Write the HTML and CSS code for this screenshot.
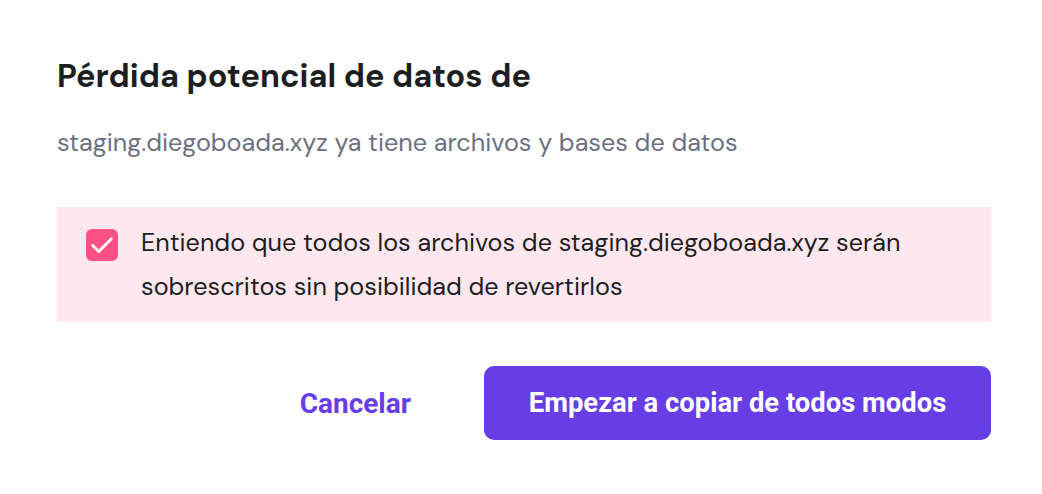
FILE: index.html
```html
<!DOCTYPE html>
<html lang="es">
<head>
    <meta charset="UTF-8">
    <meta name="viewport" content="width=device-width, initial-scale=1.0">
    <title>Pérdida potencial de datos</title>
    <link rel="stylesheet" href="styles.css">
</head>
<body>
    <div class="modal">
        <h2 class="modal-title">Pérdida potencial de datos de</h2>
        <p class="modal-text">staging.diegoboada.xyz ya tiene archivos y bases de datos</p>

        <label class="confirm-box">
            <span class="checkbox">
                <svg width="26" height="26" viewBox="0 0 24 24">
                    <path d="M3.5 12.5 L9 18 L20.5 6.5" fill="none" stroke="#fff" stroke-width="2.6" stroke-linecap="round" stroke-linejoin="round"/>
                </svg>
            </span>
            <span class="confirm-text">Entiendo que todos los archivos de staging.diegoboada.xyz serán sobrescritos sin posibilidad de revertirlos</span>
        </label>

        <div class="actions">
            <button class="btn-link">Cancelar</button>
            <button class="btn-primary">Empezar a copiar de todos modos</button>
        </div>
    </div>
</body>
</html>
```

FILE: styles.css
```css
body {
    margin: 0;
    background: #fff;
    font-family: 'DM Sans', Inter, 'Noto Sans', sans-serif;
    color: #2f1c6a;
}

.modal {
    width: 934px;
    padding: 56px 51px 54px 57px;
}

.modal-title {
    margin: 0;
    font-size: 32.4px;
    line-height: 40px;
    font-weight: 700;
    color: #1d1e20;
}

.modal-text {
    margin: 32px 0 0;
    font-size: 25.2px;
    line-height: 30px;
    color: #6d7081;
}

.confirm-box {
    display: flex;
    align-items: flex-start;
    gap: 23px;
    margin-top: 49px;
    padding: 22px 29px 13px;
    background: #fee7ef;
    cursor: pointer;
}

.checkbox {
    flex: none;
    width: 32px;
    height: 32px;
    border-radius: 6px;
    background: #fc5185;
    display: flex;
    align-items: center;
    justify-content: center;
}

.confirm-text {
    font-size: 25.2px;
    line-height: 44px;
    margin-top: -8px;
    color: #1d1e20;
}

.actions {
    display: flex;
    justify-content: flex-end;
    align-items: center;
    gap: 32px;
    margin-top: 44px;
}

.btn-link {
    background: none;
    border: none;
    padding: 0 41px 0 0;
    font-family: Roboto, sans-serif;
    font-size: 28px;
    font-weight: 700;
    color: #673de6;
    cursor: pointer;
}

.btn-primary {
    width: 507px;
    height: 74px;
    border: none;
    border-radius: 10px;
    background: #673de6;
    color: #fff;
    font-family: Roboto, sans-serif;
    font-size: 27.4px;
    font-weight: 700;
    cursor: pointer;
}
```
